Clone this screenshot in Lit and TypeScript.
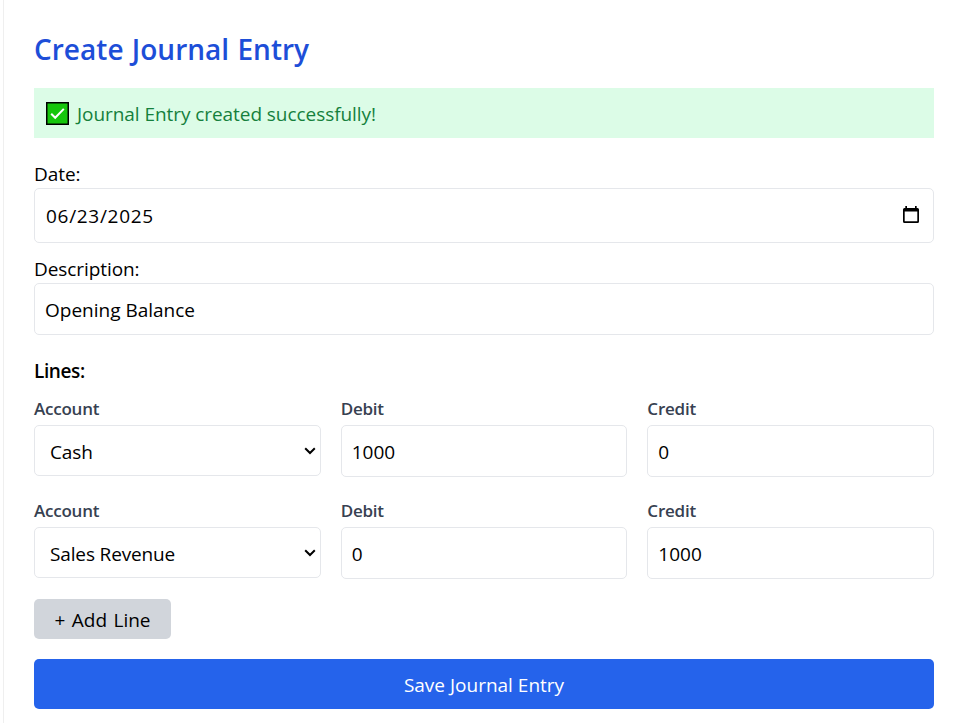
import { LitElement, html, css, svg } from "lit";
import { customElement, state } from "lit/decorators.js";

interface Line {
  account: string;
  debit: number;
  credit: number;
}

const check = svg`
  <rect x="0.75" y="0.75" width="21.5" height="21.5" fill="#16c60c" stroke="#000" stroke-width="1.5"/>
  <path d="M5.2 11.8 L9.2 15.8 L17.8 6.9" fill="none" stroke="#fff" stroke-width="2"/>`;

@customElement("app-root")
export class AppRoot extends LitElement {
  static styles = css`
    :host {
      display: block;
      height: 723px;
      overflow: hidden;
      background: #fff;
      color: #000;
      font: 19px/30px "Open Sans", "Noto Sans", sans-serif;
    }
    * { box-sizing: border-box; }
    .card {
      height: 723px;
      margin-left: 3px;
      border-left: 1px solid #efefef;
      padding: 29px 27px 0 30px;
      display: flex;
      flex-direction: column;
    }
    .title {
      margin: 0 0 19px;
      height: 40px;
      font-size: 28px;
      line-height: 40px;
      font-weight: 600;
      letter-spacing: 0.02px;
      word-spacing: 1px;
      color: #1d4ed8;
    }
    .alert {
      display: flex;
      align-items: center;
      height: 50px;
      padding: 1px 12px 0;
      gap: 8px;
      background: #dcfce7;
      color: #15803d;
      letter-spacing: -0.06px;
    }
    .alert svg { display: block; width: 23px; height: 23px; }
    .label { height: 29px; margin-top: 21px; letter-spacing: -0.08px; }
    .label.next { margin-top: 11px; }
    .field {
      display: flex;
      align-items: center;
      justify-content: space-between;
      height: 52px;
      border: 1px solid #e5e7eb;
      border-radius: 5px;
      padding: 1px 10px 0;
      background: #fff;
    }
    .field.date { height: 55px; padding: 0 14px 0 11px; letter-spacing: 0.7px; }
    .field.select { height: 51px; padding: 3px 4px 0 15px; letter-spacing: -0.14px; }
    .calendar { width: 16px; height: 19px; margin-top: -2px; }
    .chevron { width: 12px; height: 8px; margin-top: -3px; }
    .heading { height: 30px; margin-top: 21px; font-weight: 600; letter-spacing: -0.4px; }
    .row {
      display: grid;
      grid-template-columns: repeat(3, 1fr);
      gap: 20px;
      height: 82px;
      margin-bottom: 20px;
      padding-top: 10px;
    }
    .small {
      height: 29px;
      font-size: 17px;
      line-height: 25px;
      font-weight: 600;
      letter-spacing: -0.22px;
      color: #374151;
    }
    button {
      border: 0;
      border-radius: 5px;
      font: inherit;
      padding: 1px 0 0;
    }
    .add {
      width: 137px;
      height: 40px;
      margin-top: 9px;
      background: #d1d5db;
      color: #000;
      word-spacing: 1.5px;
    }
    .save { height: 50px; margin-top: 20px; background: #2563eb; color: #fff; }
  `;

  @state() private lines: Line[] = [
    { account: "Cash", debit: 1000, credit: 0 },
    { account: "Sales Revenue", debit: 0, credit: 1000 },
  ];

  private renderLine(line: Line) {
    return html`<div class="row">
      <div>
        <div class="small"><span>Account</span></div>
        <div class="field select">
          <span>${line.account}</span>
          <svg class="chevron" viewBox="0 0 12 8"><path d="M1.2 1.3 L6 6 L10.8 1.3" fill="none" stroke="#000" stroke-width="2"/></svg>
        </div>
      </div>
      <div>
        <div class="small"><span>Debit</span></div>
        <div class="field"><span>${line.debit}</span></div>
      </div>
      <div>
        <div class="small"><span>Credit</span></div>
        <div class="field"><span>${line.credit}</span></div>
      </div>
    </div>`;
  }

  render() {
    return html`<main class="card">
      <h2 class="title">Create Journal Entry</h2>
      <div class="alert">
        <svg viewBox="0 0 23 23">${check}</svg>
        <span class="message">Journal Entry created successfully!</span>
      </div>
      <div class="label">Date:</div>
      <div class="field date">
        <span>06/23/2025</span>
        <svg class="calendar" viewBox="0 0 16 19">
          <path d="M2.3 1h1.7v2h8V1h1.7v2h.8a1.500 1.500 0 0 1 1.500 1.500v12a1.500 1.500 0 0 1-1.500 1.500h-13A1.500 1.500 0 0 1 0 16.500v-12A1.500 1.500 0 0 1 1.500 3h.8zM1.700 6.500v9.800h12.600V6.500z" fill="#000" fill-rule="evenodd"/>
        </svg>
      </div>
      <div class="label next">Description:</div>
      <div class="field"><span>Opening Balance</span></div>
      <div class="heading">Lines:</div>
      <div class="lines">${this.lines.map((l) => this.renderLine(l))}</div>
      <button class="add">+ Add Line</button>
      <button class="save">Save Journal Entry</button>
    </main>`;
  }
}
